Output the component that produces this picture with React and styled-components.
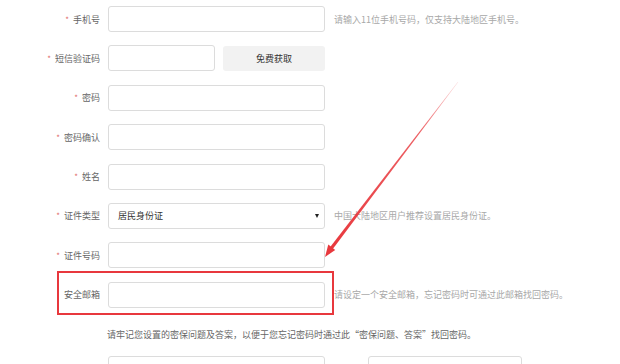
import React from 'react';
import styled, { createGlobalStyle } from 'styled-components';

const GlobalStyle = createGlobalStyle`
  html, body {
    margin: 0;
    padding: 0;
    background: #fff;
  }
  body {
    font-family: "Noto Sans CJK SC", "Liberation Sans", sans-serif;
    overflow: hidden;
  }
`

const Page = styled.div`
  position: relative;
  width: 620px;
  height: 364px;
  padding-top: 6px;
  box-sizing: border-box;
  overflow: hidden;
`

const Row = styled.div`
  display: flex;
  align-items: center;
  height: 26px;
  margin-bottom: 13.4px;
`

const Label = styled.label`
  width: 108px;
  padding-right: 8px;
  box-sizing: border-box;
  text-align: right;
  font-size: 9px;
  color: #666;
  white-space: nowrap;
`

const Star = styled.span`
  color: #e06a6a;
  margin-right: 4px;
  font-size: 8px;
`

const Input = styled.input`
  width: ${p => p.$w || 217}px;
  height: 26px;
  box-sizing: border-box;
  border: 1px solid #dcdcdc;
  border-radius: 3px;
  outline: none;
  padding: 0 8px;
  font-family: inherit;
  font-size: 9px;
  background: #fff;
`

const CodeButton = styled.button`
  width: 102px;
  height: 25px;
  margin-left: 8px;
  border: none;
  border-radius: 3px;
  background: #f2f2f2;
  color: #333;
  font-family: inherit;
  font-size: 9px;
  padding: 0;
`

const Select = styled.div`
  position: relative;
  width: 217px;
  height: 26px;
  box-sizing: border-box;
  border: 1px solid #dcdcdc;
  border-radius: 3px;
  display: flex;
  align-items: center;
  padding: 0 9px;
  font-size: 9px;
  color: #333;
`

const Caret = styled.span`
  margin-left: auto;
  margin-right: -4px;
  width: 0;
  height: 0;
  border-left: 2.5px solid transparent;
  border-right: 2.5px solid transparent;
  border-top: 4px solid #222;
`

const Hint = styled.span`
  margin-left: 9px;
  font-size: 9px;
  color: #a8a8a8;
  white-space: nowrap;
`

const Note = styled.p`
  margin: 20px 0 0;
  padding-left: 107px;
  font-size: 9px;
  line-height: 14px;
  color: #666;
  white-space: nowrap;
`

const BottomRow = styled.div`
  display: flex;
  gap: 43px;
  padding-left: 108px;
  margin-top: 14px;
`

const BottomInput = styled(Input)`
  width: ${p => p.$w}px;
`

const Highlight = styled.div`
  position: absolute;
  left: 57px;
  top: 271px;
  width: 277px;
  height: 44px;
  box-sizing: border-box;
  border: 2px solid #e8383d;
  pointer-events: none;
`

const Arrow = styled.svg`
  position: absolute;
  left: 0;
  top: 0;
  pointer-events: none;
`

const fields = [
  { label: '手机号', required: true, hint: '请输入11位手机号码，仅支持大陆地区手机号。' },
  { label: '短信验证码', required: true, kind: 'code' },
  { label: '密码', required: true },
  { label: '密码确认', required: true },
  { label: '姓名', required: true },
  { label: '证件类型', required: true, kind: 'select', hint: '中国大陆地区用户推荐设置居民身份证。' },
  { label: '证件号码', required: true },
  { label: '安全邮箱', hint: '请设定一个安全邮箱，忘记密码时可通过此邮箱找回密码。' },
]

function Field({ kind }) {
  if (kind === 'code') {
    return (
      <>
        <Input $w={107} />
        <CodeButton>免费获取</CodeButton>
      </>
    )
  }
  if (kind === 'select') {
    return (
      <Select>
        居民身份证
        <Caret />
      </Select>
    )
  }
  return <Input />
}

export default function App() {
  return (
    <Page>
      <GlobalStyle />
      {fields.map(f => (
        <Row key={f.label}>
          <Label>
            {f.required && <Star>*</Star>}
            {f.label}
          </Label>
          <Field kind={f.kind} />
          {f.hint && <Hint>{f.hint}</Hint>}
        </Row>
      ))}

      <Note>请牢记您设置的密保问题及答案，以便于您忘记密码时通过此“密保问题、答案”找回密码。</Note>

      <BottomRow>
        <BottomInput $w={217} />
        <BottomInput $w={154} />
      </BottomRow>

      <Highlight />

      <Arrow width="620" height="364" viewBox="0 0 620 364">
        <defs>
          <linearGradient id="shaft" x1="458" y1="82" x2="330" y2="250" gradientUnits="userSpaceOnUse">
            <stop offset="0" stopColor="#e8383d" stopOpacity="0.25" />
            <stop offset="0.3" stopColor="#e8383d" stopOpacity="0.8" />
            <stop offset="1" stopColor="#e8383d" />
          </linearGradient>
        </defs>
        <polygon points="458.2,82.1 457.8,81.9 330.0,247.2 332.6,249.2" fill="url(#shaft)" />
        <polygon points="325,257 328.3,244.6 335.2,249.9" fill="#e8383d" />
      </Arrow>
    </Page>
  )
}
